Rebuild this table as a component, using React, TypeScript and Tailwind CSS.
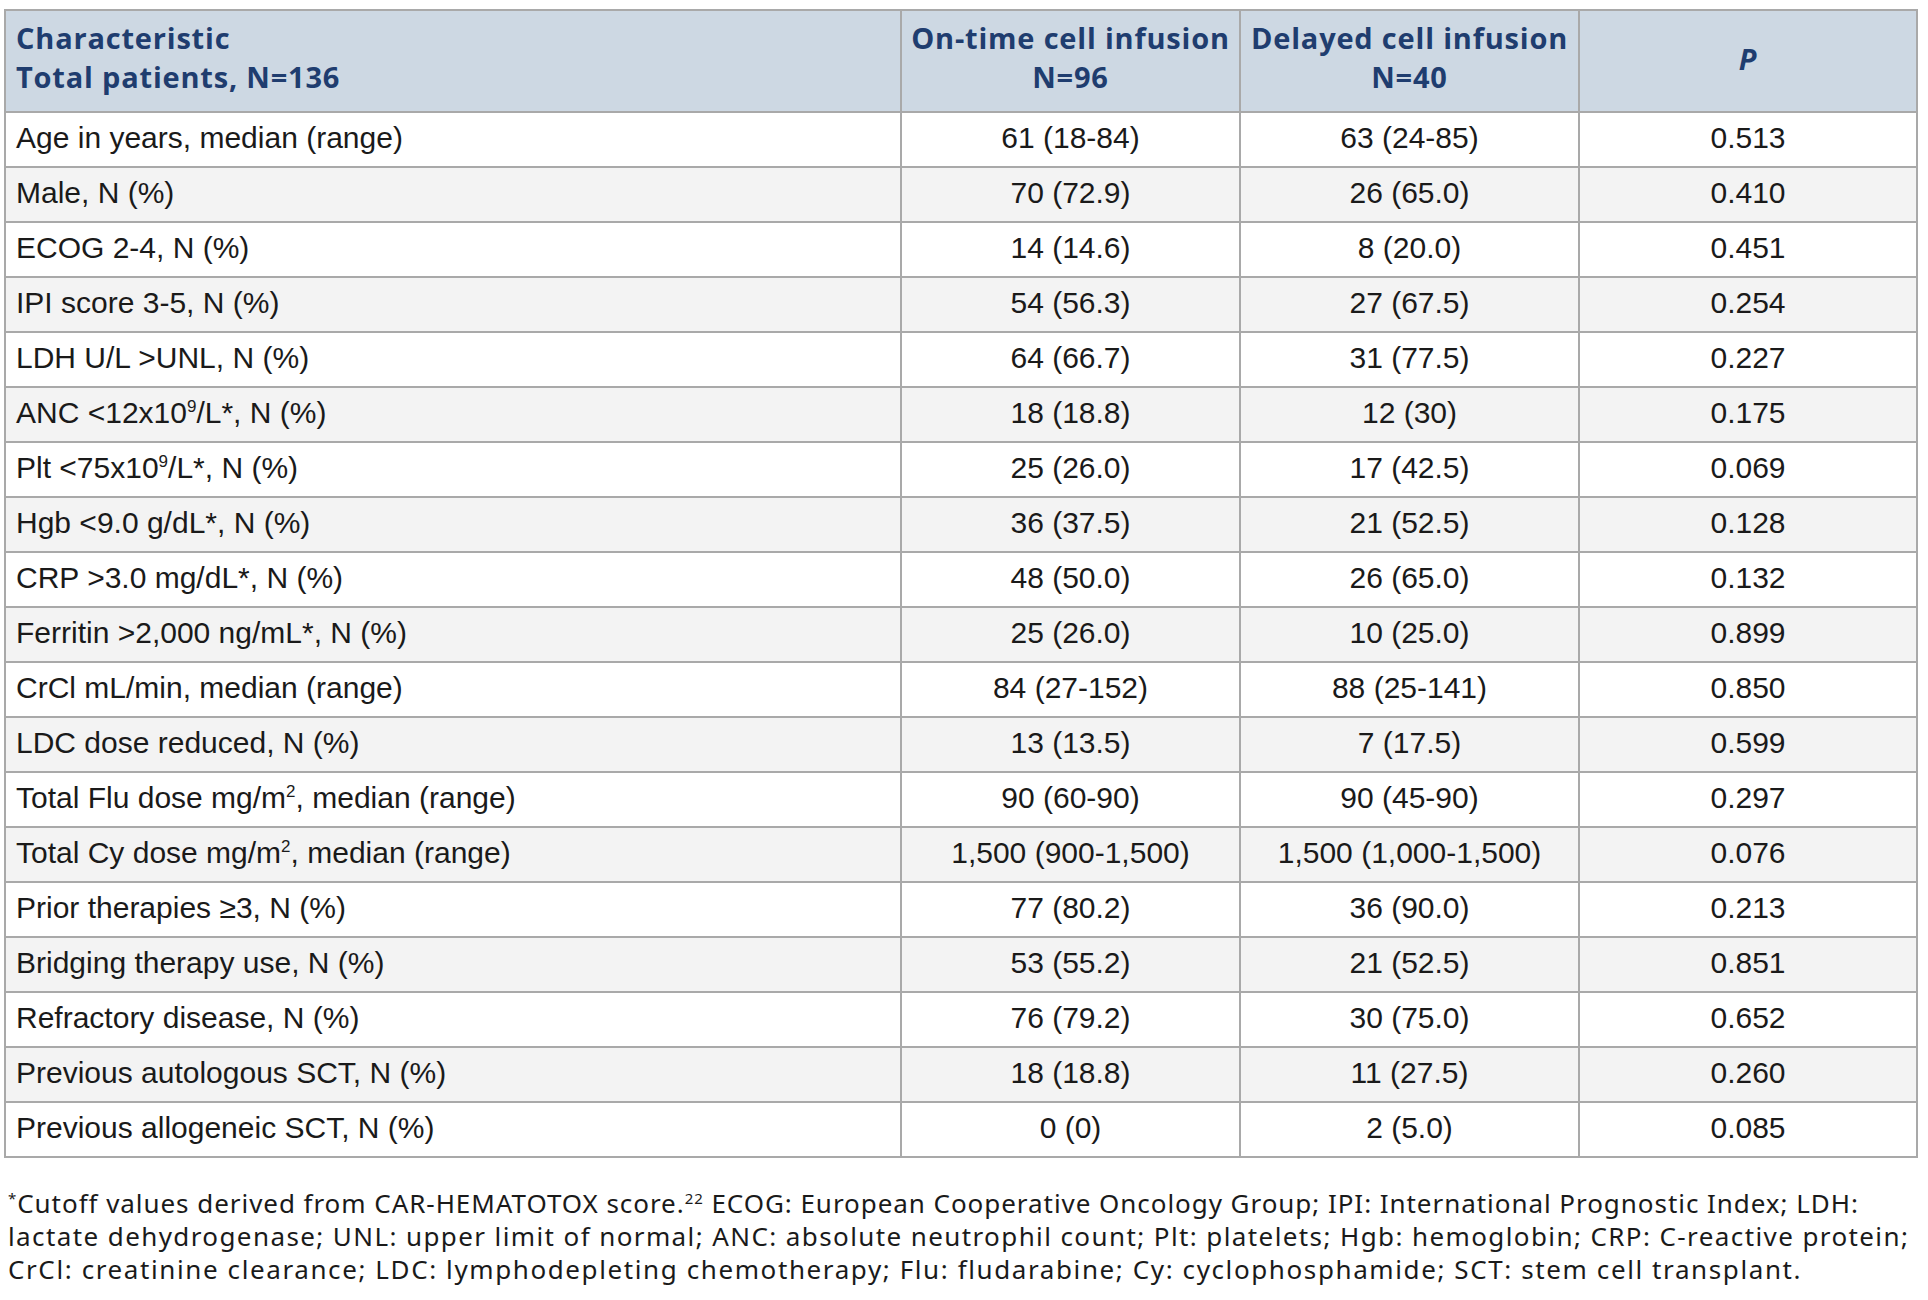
import React from "react";

type Row = { label: React.ReactNode; a: string; b: string; p: string };

const sup = (t: string) => (
  <sup className="text-[17px] top-[-0.65em]">{t}</sup>
);

const rows: Row[] = [
  { label: "Age in years, median (range)", a: "61 (18-84)", b: "63 (24-85)", p: "0.513" },
  { label: "Male, N (%)", a: "70 (72.9)", b: "26 (65.0)", p: "0.410" },
  { label: "ECOG 2-4, N (%)", a: "14 (14.6)", b: "8 (20.0)", p: "0.451" },
  { label: "IPI score 3-5, N (%)", a: "54 (56.3)", b: "27 (67.5)", p: "0.254" },
  { label: "LDH U/L >UNL, N (%)", a: "64 (66.7)", b: "31 (77.5)", p: "0.227" },
  { label: <>ANC &lt;12x10{sup("9")}/L*, N (%)</>, a: "18 (18.8)", b: "12 (30)", p: "0.175" },
  { label: <>Plt &lt;75x10{sup("9")}/L*, N (%)</>, a: "25 (26.0)", b: "17 (42.5)", p: "0.069" },
  { label: "Hgb <9.0 g/dL*, N (%)", a: "36 (37.5)", b: "21 (52.5)", p: "0.128" },
  { label: "CRP >3.0 mg/dL*, N (%)", a: "48 (50.0)", b: "26 (65.0)", p: "0.132" },
  { label: "Ferritin >2,000 ng/mL*, N (%)", a: "25 (26.0)", b: "10 (25.0)", p: "0.899" },
  { label: "CrCl mL/min, median (range)", a: "84 (27-152)", b: "88 (25-141)", p: "0.850" },
  { label: "LDC dose reduced, N (%)", a: "13 (13.5)", b: "7 (17.5)", p: "0.599" },
  { label: <>Total Flu dose mg/m{sup("2")}, median (range)</>, a: "90 (60-90)", b: "90 (45-90)", p: "0.297" },
  { label: <>Total Cy dose mg/m{sup("2")}, median (range)</>, a: "1,500 (900-1,500)", b: "1,500 (1,000-1,500)", p: "0.076" },
  { label: "Prior therapies ≥3, N (%)", a: "77 (80.2)", b: "36 (90.0)", p: "0.213" },
  { label: "Bridging therapy use, N (%)", a: "53 (55.2)", b: "21 (52.5)", p: "0.851" },
  { label: "Refractory disease, N (%)", a: "76 (79.2)", b: "30 (75.0)", p: "0.652" },
  { label: "Previous autologous SCT, N (%)", a: "18 (18.8)", b: "11 (27.5)", p: "0.260" },
  { label: "Previous allogeneic SCT, N (%)", a: "0 (0)", b: "2 (5.0)", p: "0.085" },
];

export default function App() {
  const th =
    "border-2 border-[#a9a9a9] align-middle text-[#1f3d6f] font-bold text-[29px] tracking-[0.8px] leading-[39px] font-['Open_Sans',sans-serif] whitespace-nowrap";
  const td =
    "border-2 border-[#a9a9a9] h-[55px] p-0 pb-[3px] align-middle text-[30px] leading-[34px] text-[#1a1a1a] font-['Liberation_Sans',Arial,sans-serif] whitespace-nowrap";
  return (
    <div className="bg-white w-[1928px] min-h-[1300px] pl-[4px] pt-[9px]">
      <table className="table-fixed border-collapse w-[1912px]">
        <colgroup>
          <col className="w-[896px]" />
          <col className="w-[339px]" />
          <col className="w-[339px]" />
          <col className="w-[338px]" />
        </colgroup>
        <thead>
          <tr className="bg-[#cdd8e3] h-[102px]">
            <th className={`${th} text-left pl-[10px] pb-[9px]`}>
              Characteristic
              <br />
              Total patients, N=136
            </th>
            <th className={`${th} text-center pb-[9px] px-0`}>
              On-time cell infusion
              <br />
              N=96
            </th>
            <th className={`${th} text-center pb-[9px] px-0`}>
              Delayed cell infusion
              <br />
              N=40
            </th>
            <th className={`${th} text-center italic pb-[6px]`}>P</th>
          </tr>
        </thead>
        <tbody>
          {rows.map((r, i) => (
            <tr key={i} className={i % 2 === 0 ? "bg-white" : "bg-[#f3f3f3]"}>
              <td className={`${td} text-left pl-[10px]`}>{r.label}</td>
              <td className={`${td} text-center`}>{r.a}</td>
              <td className={`${td} text-center`}>{r.b}</td>
              <td className={`${td} text-center`}>{r.p}</td>
            </tr>
          ))}
        </tbody>
      </table>
      <div className="mt-[29px] pl-[4px] text-[26px] leading-[33px] text-[#1a1a1a] font-['Noto_Sans',sans-serif] whitespace-nowrap">
        <p className="tracking-[0.95px]">
          <sup className="text-[15px] top-[-0.6em]">*</sup>Cutoff values derived from CAR-HEMATOTOX score.
          <sup className="text-[15px] top-[-0.6em]">22</sup> ECOG: European Cooperative Oncology Group; IPI: International Prognostic Index; LDH:
        </p>
        <p className="tracking-[1.4px]">
          lactate dehydrogenase; UNL: upper limit of normal; ANC: absolute neutrophil count; Plt: platelets; Hgb: hemoglobin; CRP: C-reactive protein;
        </p>
        <p className="tracking-[1.6px]">
          CrCl: creatinine clearance; LDC: lymphodepleting chemotherapy; Flu: fludarabine; Cy: cyclophosphamide; SCT: stem cell transplant.
        </p>
      </div>
    </div>
  );
}
